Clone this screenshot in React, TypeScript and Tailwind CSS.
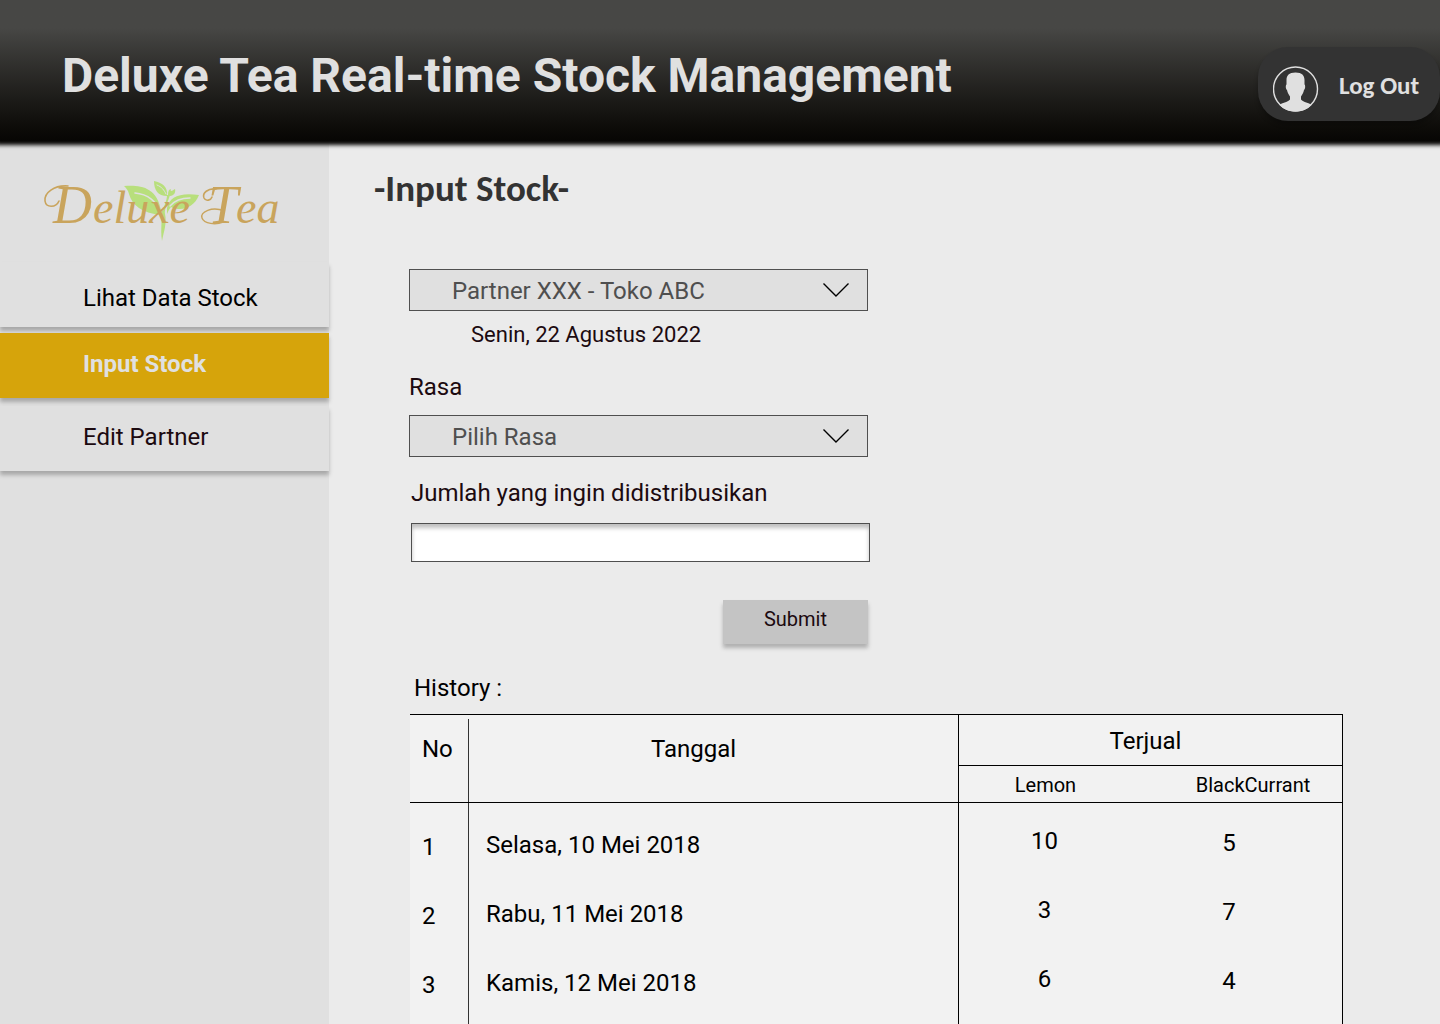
import { useState } from "react";

const navItems = ["Lihat Data Stock", "Input Stock", "Edit Partner"];

const history = [
  { no: 1, date: "Selasa, 10 Mei 2018", lemon: 10, blackcurrant: 5 },
  { no: 2, date: "Rabu, 11 Mei 2018", lemon: 3, blackcurrant: 7 },
  { no: 3, date: "Kamis, 12 Mei 2018", lemon: 6, blackcurrant: 4 },
];

function Logo() {
  return (
    <svg viewBox="0 0 244 68" className="h-[68px] w-[244px]" role="img" aria-label="Deluxe Tea">
      <g transform="translate(1 3)">
        <g fill="#b8df7c">
          <path d="M83 8 C96 7 117 7 120 34 C121 35 121 36 120 37 C101 35 91 27 88 16 C87 12 85 10 83 8Z" />
          <path d="M113 3 C121 5 127 8 126 18 C117 18 113 12 113 3Z" />
          <path d="M126 30 C128 19 139 14 158 17 C153 30 140 34 130 29 C128 31 127 34 126 36Z" />
          <path d="M127 17 C127 13 128 11 130 11 C129 13 130 14 134 11 C135 14 133 18 129 18Z" />
          <path d="M120 31 C122 40 119 50 121 63 C123 53 126 45 124 36 C123 31 127 24 129 17 L126 17 C126 23 123 27 122 33Z" />
        </g>
        <g fill="none" stroke="#e0e0e0" strokeLinecap="round">
          <path d="M94 15 C107 16 116 24 119 34" strokeWidth="1.6" />
          <path d="M129 28 C134 22 141 20 149 20" strokeWidth="1.4" />
          <path d="M116 7 C121 9 123 12 125 16" strokeWidth="1" />
        </g>
      </g>
      {/* Flourishes leading into the two capitals */}
      <g fill="none" stroke="#c9a45c" strokeLinecap="round">
        <path d="M28 11 C14 10 4 18 5 26 C6 33 16 33 19 26" strokeWidth="1.6" />
        <path d="M176 14 C168 13 162 18 164 23 C166 27 171 25 172 22" strokeWidth="1.6" />
        <path d="M184 36 C172 31 160 37 162 43 C164 49 176 50 183 47" strokeWidth="1.4" />
      </g>
      <g fill="#c9a45c" fontFamily="'Liberation Serif', serif" fontStyle="italic">
        <text x="13" y="48" fontSize="54">D</text>
        <text x="53" y="48" fontSize="46">eluxe</text>
        <text x="168" y="48" fontSize="54">T</text>
        <text x="196" y="48" fontSize="46">ea</text>
      </g>
    </svg>
  );
}

function UserIcon() {
  return (
    <svg viewBox="0 0 46 46" className="size-[46px] shrink-0" aria-hidden="true">
      <circle cx="22.500" cy="23" r="22" fill="none" stroke="#e0e0e0" strokeWidth="1.4" />
      <path
        fill="#e0e0e0"
        d="M22.500 6.500 C29 6.500 31.500 9.500 31.500 14 L31.500 18.500 C32.500 19 32.500 23 31 24 C30.500 27 29 29 28 30.500 L28 33.500 C30.500 36.500 36 36.500 38.500 39 C34.500 43.500 28.500 45.500 22.500 45.500 C16.500 45.500 10.500 43.500 6.500 39 C9 36.500 14.500 36.500 17 33.500 L17 30.500 C16 29 14.500 27 14 24 C12.500 23 12.500 19 13.500 18.500 L13.500 14 C13.500 9.500 16 6.500 22.500 6.500Z"
      />
    </svg>
  );
}

function SelectBox({ id, label, options }: { id: string; label?: string; options: string[] }) {
  return (
    <div className="relative">
      <select
        id={id}
        aria-label={label}
        className="block h-[42px] w-full appearance-none border border-[#4f4f4f] bg-[#e0e0e0] pt-0.5 pr-14 pl-[42px] text-2xl leading-8 text-[#4f4f4f]"
      >
        {options.map((option) => (
          <option key={option}>{option}</option>
        ))}
      </select>
      <svg
        viewBox="0 0 28 16"
        className="pointer-events-none absolute top-[13px] right-[18px] h-4 w-7"
        fill="none"
        stroke="#000"
        strokeWidth="1.4"
        aria-hidden="true"
      >
        <path d="M1.500 1.500 L14 14 L26.500 1.500" />
      </svg>
    </div>
  );
}

export default function App() {
  const [active, setActive] = useState("Input Stock");
  const [amount, setAmount] = useState("");

  return (
    <div className="flex min-h-screen flex-col overflow-x-hidden bg-[#ebebeb] font-[Roboto,sans-serif] text-black">
      <header className="relative z-10 flex h-[141px] items-start justify-between bg-linear-to-b from-[#474745] from-20% to-[#070604] pl-[62px] shadow-[0_0_4px_4px_#070604]">
        <h1 className="pt-[46px] text-5xl leading-[60px] font-bold text-[#e0e0e0]">
          Deluxe Tea Real-time Stock Management
        </h1>
        <button
          type="button"
          className="mt-[47px] flex h-[74px] w-[182px] items-center gap-5 rounded-[30px] bg-[#333333] pl-[15px] shadow-[0_4px_4px_rgba(0,0,0,0.25)]"
        >
          <span className="pt-2.5">
            <UserIcon />
          </span>
          <span className="pt-1 font-[Carlito,Lato,sans-serif] text-[25px] leading-8 font-bold whitespace-nowrap text-[#e0e0e0]">
            Log Out
          </span>
        </button>
      </header>

      <div className="flex flex-1">
        <aside className="w-[329px] shrink-0 bg-[#e0e0e0]">
          <div className="flex h-[121px] items-start pt-[34px] pl-10">
            <Logo />
          </div>
          <nav className="flex flex-col">
            {navItems.map((item) => (
              <a
                key={item}
                href="#"
                onClick={() => setActive(item)}
                aria-current={item === active ? "page" : undefined}
                className={
                  item === active
                    ? "mt-1.5 flex h-[65px] items-center bg-[#d6a40b] pb-1 pl-[83px] text-2xl leading-8 font-bold text-[#e0e0e0] shadow-[0_4px_4px_rgba(0,0,0,0.25)]"
                    : "flex h-[65px] items-center bg-[#e0e0e0] pt-1.5 pl-[83px] text-2xl leading-8 shadow-[0_4px_4px_rgba(0,0,0,0.25)] last:mt-2 last:pt-0 last:pb-1 last:text-[#1c0a10]"
                }
              >
                {item}
              </a>
            ))}
          </nav>
        </aside>

        <main className="min-w-0 flex-1 pt-6">
          <h2 className="pl-[45px] font-[Carlito,Lato,sans-serif] text-[37px] leading-[48px] font-bold text-[#333333]">
            -Input Stock-
          </h2>

          <form
            className="mt-14 ml-20 flex max-w-[459px] flex-col text-2xl leading-8 text-[#1c0a10]"
            onSubmit={(event) => event.preventDefault()}
          >
            <SelectBox id="partner" label="Partner" options={["Partner XXX - Toko ABC"]} />
            <p className="mt-2 pl-[62px] text-[22px] leading-8">Senin, 22 Agustus 2022</p>
            <label htmlFor="rasa" className="mt-5 mb-3">
              Rasa
            </label>
            <SelectBox id="rasa" options={["Pilih Rasa", "Lemon", "BlackCurrant"]} />
            <div className="mt-5 -mr-0.5 ml-0.5 flex flex-col gap-3.5">
              <label htmlFor="jumlah">Jumlah yang ingin didistribusikan</label>
              <input
                id="jumlah"
                value={amount}
                onChange={(event) => setAmount(event.target.value)}
                className="h-[39px] border border-[#4f4f4f] bg-white px-3 shadow-[inset_0_4px_4px_rgba(0,0,0,0.25)]"
              />
            </div>
            <button
              type="submit"
              className="mt-[38px] h-11 w-[145px] self-end bg-[#c4c4c4] pb-1.5 text-xl shadow-[0_4px_4px_rgba(0,0,0,0.25)]"
            >
              Submit
            </button>
          </form>

          <section className="mt-7 mr-[97px] ml-[81px]">
            <h3 className="pl-1 text-2xl leading-8">History :</h3>
            <table className="mt-2.5 w-full table-fixed border-separate border-spacing-0 border-t border-r border-black bg-[#f2f2f2] text-2xl leading-8">
              <colgroup>
                <col className="w-[59px]" />
                <col />
                <col className="w-[173px]" />
                <col className="w-[210px]" />
              </colgroup>
              <thead>
                <tr className="h-[51px]">
                  <th
                    rowSpan={2}
                    className="relative border-b border-black pb-5 pl-3 text-left font-normal after:absolute after:top-1 after:right-0 after:bottom-0 after:w-px after:bg-[#333333]"
                  >
                    No
                  </th>
                  <th rowSpan={2} className="border-r border-b border-black pr-10 pb-5 text-center font-normal">
                    Tanggal
                  </th>
                  <th colSpan={2} className="border-b border-black pt-0.5 pr-2.5 text-center font-normal">
                    Terjual
                  </th>
                </tr>
                <tr className="h-[37px] text-xl">
                  <th className="border-b border-black px-0 pt-0.5 pb-0 text-center font-normal">Lemon</th>
                  <th className="border-b border-black pt-0.5 pr-0 pb-0 pl-8 text-center font-normal">BlackCurrant</th>
                </tr>
              </thead>
              <tbody>
                {history.map((row) => (
                  <tr key={row.no} className="align-top">
                    <td className="h-[69px] border-r border-[#333333] pt-7 pl-3">{row.no}</td>
                    <td className="border-r border-black pt-[26px] pl-[17px]">{row.date}</td>
                    <td className="pt-[22px] pr-0.5 text-center">{row.lemon}</td>
                    <td className="pt-6 pr-4 text-center">{row.blackcurrant}</td>
                  </tr>
                ))}
                <tr aria-hidden="true">
                  <td className="h-3.5 border-r border-[#333333]" />
                  <td className="border-r border-black" />
                  <td colSpan={2} />
                </tr>
              </tbody>
            </table>
          </section>
        </main>
      </div>
    </div>
  );
}
